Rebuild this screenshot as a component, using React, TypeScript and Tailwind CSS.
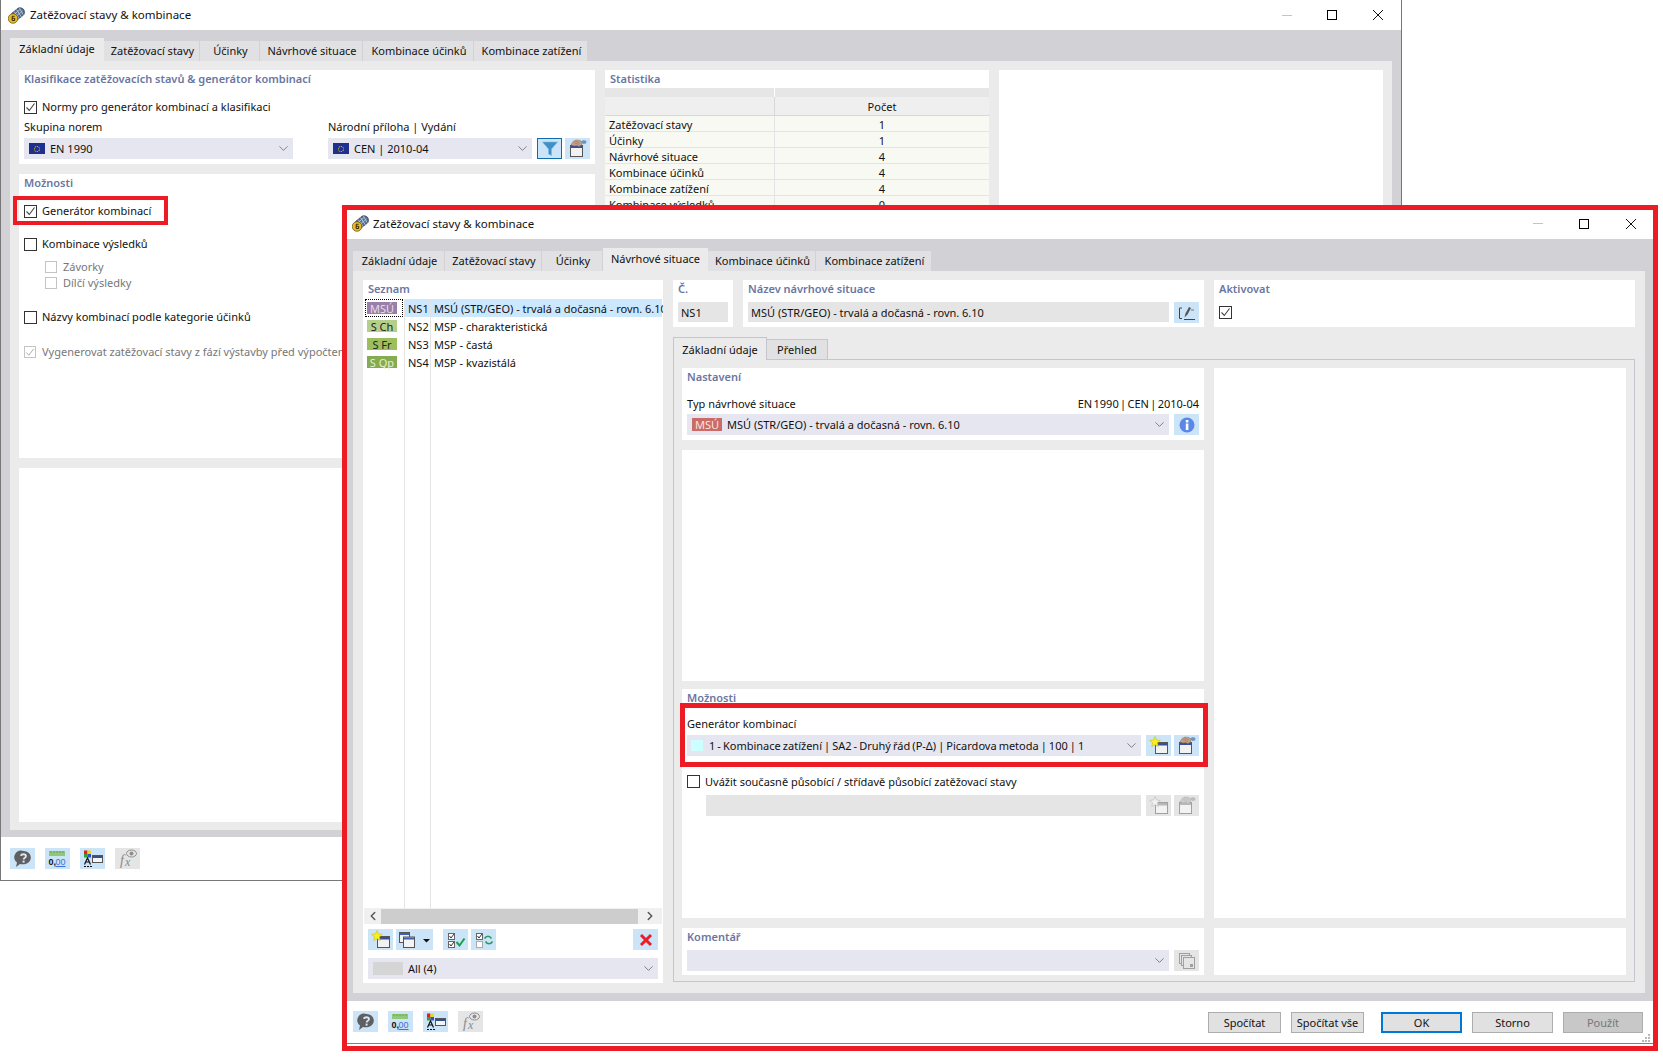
import type { ReactNode } from 'react';
import { ChevronDown, ChevronLeft, ChevronRight } from 'lucide-react';

function AppIcon() {
  return (
    <svg width="17" height="17" viewBox="0 0 17 17" className="shrink-0">
      <path d="M3.500 6.500L10 1.200c1.500-1 5-.4 6 1.800 1 2.200.4 4.500-1 5.500L8.500 13.500z" fill="#566d8c" stroke="#2c3b52" strokeWidth="0.700" />
      <path d="M6 4.500l5.500 7.500M8.500 2.500l5 7.500M11.500 1l3.500 6.500M5 8.500l7-6M6.500 10.500l8-6.500" stroke="#c4d2e4" strokeWidth="0.800" />
      <circle cx="5" cy="11.500" r="4.800" fill="#e9b92c" stroke="#5f4c10" strokeWidth="0.700" />
      <path d="M6.500 9.300h-2.300v4.200h2.500v-2.200h-2.500" fill="none" stroke="#3c2f08" strokeWidth="1" />
    </svg>
  );
}

function WindowControls({ gap }: { gap: string }) {
  return (
    <div className={`flex items-center ${gap}`}>
      <div className="h-px w-[10px] bg-[#c4c4c4]" />
      <div className="size-[10px] border border-black" />
      <svg width="12" height="12" viewBox="0 0 12 12">
        <path d="M1 1l10 10M11 1L1 11" stroke="#111" strokeWidth="1" />
      </svg>
    </div>
  );
}

function Flag() {
  return (
    <div className="flex h-[11px] w-[16px] shrink-0 items-center justify-center bg-[#1f2f8f]">
      <div className="size-[6px] rounded-full border border-dotted border-[#e8c840]" />
    </div>
  );
}

function Check({ on, size = 'size-[13px]', tone = 'border-[#333333]', mark = '#444444' }: { on?: boolean; size?: string; tone?: string; mark?: string }) {
  return (
    <div className={`${size} ${tone} flex shrink-0 items-center justify-center border bg-white`}>
      {on && (
        <svg width="11" height="11" viewBox="0 0 11 11">
          <path d="M1.500 5.500l2.800 3L9.500 1.500" fill="none" stroke={mark} strokeWidth="1.100" />
        </svg>
      )}
    </div>
  );
}

// noto sits a bit low in its box, this pulls a label up by a pixel
function Txt({ children }: { children: ReactNode }) {
  return <span className="-mt-[2px] whitespace-nowrap">{children}</span>;
}

function Heading({ children, className = 'h-[18px]' }: { children: ReactNode; className?: string }) {
  return (
    <div className={`${className} flex items-center font-semibold text-[#6a76a2]`}>
      <Txt>{children}</Txt>
    </div>
  );
}

function Btn({ children, off, wide }: { children: ReactNode; off?: boolean; wide?: boolean }) {
  return (
    <div className={`${off ? 'bg-[#e5e5e5]' : 'bg-[#cce4f7]'} ${wide ? 'w-[37px]' : 'w-[25px]'} flex h-[21px] shrink-0 items-center justify-center`}>
      {children}
    </div>
  );
}

function NewIcon({ off }: { off?: boolean }) {
  return (
    <svg width="20" height="19" viewBox="0 0 20 19">
      <rect x="6.500" y="6.500" width="12" height="11" fill="#f2f2f2" stroke={off ? '#a0a0a0' : '#555555'} />
      <rect x="7" y="7" width="11" height="2.500" fill={off ? '#b8b8b8' : '#34509c'} />
      <path d="M6 0.500l1.500 3.500 3.800.4-2.900 2.500.9 3.700L6 8.700l-3.300 1.900.9-3.700L.7 4.400l3.800-.4z" fill={off ? '#f0f0f0' : '#f8ee20'} stroke={off ? '#b0b0b0' : '#c8b400'} strokeWidth="0.500" />
    </svg>
  );
}

function HandIcon({ off }: { off?: boolean }) {
  return (
    <svg width="20" height="19" viewBox="0 0 20 19">
      <rect x="2.500" y="6.500" width="12" height="11" fill="#f2f2f2" stroke={off ? '#a0a0a0' : '#555555'} />
      <rect x="3" y="7" width="11" height="2" fill={off ? '#b8b8b8' : '#34509c'} />
      <path d="M3 6l2-3.500 3-1.500 4 .5 2 1.500-.5 3-2.500 1.500-2.500-1-2 .5z" fill={off ? '#cccccc' : '#c79f82'} stroke={off ? '#acacac' : '#8c6f5a'} strokeWidth="0.500" />
      <path d="M6 3.500l5 2M7 2l5 2" stroke={off ? '#b4b4b4' : '#8c6f5a'} strokeWidth="0.500" />
      <path d="M13 2.500c2-1.700 3.500-1.700 5.500-.5l-.5 2.500-3 .5z" fill={off ? '#bcbcbc' : '#6f93c4'} />
    </svg>
  );
}

function HelpIcon() {
  return (
    <svg width="20" height="18" viewBox="0 0 20 18">
      <path d="M10.500 1a7 6.600 0 0 1 2 13c-2 .4-4 .3-5.500 0L3 17l1-4.500A7 6.600 0 0 1 10.500 1z" fill="#5f5f62" />
      <path d="M8 5.800c.3-2 4.800-2.200 5 .2.100 1.700-2.300 1.800-2.400 3.500" fill="none" stroke="#dbe8f4" strokeWidth="1.800" />
      <rect x="9.600" y="10.600" width="2" height="2" fill="#dbe8f4" />
    </svg>
  );
}

function UnitsIcon() {
  return (
    <svg width="20" height="18" viewBox="0 0 20 18" className="overflow-visible">
      <rect x="1" y="1" width="16" height="5" fill="#8fc878" />
      <path d="M3 1v2M6 1v2M9 1v2M12 1v2M15 1v2" stroke="#5c9a48" strokeWidth="0.800" />
      <text x="0.500" y="15" fontSize="9" fontWeight="700" fontFamily="Liberation Sans" fill="#111">0,</text>
      <text x="7.500" y="15" fontSize="9" fontFamily="Liberation Sans" fill="#3f6fd8">00</text>
      <path d="M7.500 16.500h10" stroke="#3f6fd8" strokeWidth="1" />
    </svg>
  );
}

function ColorIcon() {
  return (
    <svg width="20" height="18" viewBox="0 0 20 18">
      <rect x="1" y="0.500" width="3.500" height="3.500" fill="#e02020" />
      <rect x="4.500" y="0.500" width="3.500" height="3.500" fill="#e8d820" />
      <rect x="1" y="4" width="3.500" height="3.500" fill="#30a030" />
      <rect x="4.500" y="4" width="3.500" height="3.500" fill="#3050d0" />
      <rect x="9.500" y="5.500" width="10" height="7" fill="#f4f4f4" stroke="#555" />
      <rect x="10" y="6" width="9" height="2" fill="#33508f" />
      <path d="M1.500 14.500L4.500 8l3 6.500M2.800 12h3.400" fill="none" stroke="#111" strokeWidth="1.200" />
      <path d="M1 16.500h2M4 16.500h2M7 16.500h2" stroke="#111" strokeWidth="1.200" />
    </svg>
  );
}

function FxIcon() {
  return (
    <svg width="20" height="19" viewBox="0 0 20 19" className="overflow-visible">
      <text x="2" y="15.500" fontSize="14" fontStyle="italic" fontFamily="Liberation Serif" fill="#8a8a8a">f</text>
      <text x="7" y="16.500" fontSize="12" fontStyle="italic" fontFamily="Liberation Serif" fill="#8a8a8a">x</text>
      <ellipse cx="13.500" cy="4.500" rx="5" ry="3.500" fill="none" stroke="#8f8f8f" />
      <circle cx="13.500" cy="4.500" r="2" fill="#8f8f8f" />
    </svg>
  );
}

function FooterIcons() {
  return (
    <div className="flex gap-[10px]">
      <Btn><HelpIcon /></Btn>
      <Btn><UnitsIcon /></Btn>
      <Btn><ColorIcon /></Btn>
      <Btn off><FxIcon /></Btn>
    </div>
  );
}

function Select({ children, className }: { children: ReactNode; className: string }) {
  return (
    <div className={`${className} flex h-[21px] items-center bg-[#e6e6f0] pr-[2px]`}>
      <div className="flex min-w-0 flex-1 items-center whitespace-nowrap">{children}</div>
      <ChevronDown size={15} strokeWidth={1} className="shrink-0 text-[#444444]" />
    </div>
  );
}

function Tab({ label, w, active }: { label: string; w: string; active?: boolean }) {
  return (
    <div className={`${w} ${active ? 'h-[23px] bg-[#ebebeb]' : 'h-[20px] border-r border-[#d1d1d6] bg-[#e1e1e3] pl-[2px]'} flex items-center justify-center whitespace-nowrap`}>
      <Txt>{label}</Txt>
    </div>
  );
}

const stats = [
  ['Zatěžovací stavy', '1'],
  ['Účinky', '1'],
  ['Návrhové situace', '4'],
  ['Kombinace účinků', '4'],
  ['Kombinace zatížení', '4'],
  ['Kombinace výsledků', '0'],
];

function BackWindow() {
  return (
    <div className="absolute left-0 top-0 flex h-[881px] w-[1402px] flex-col border-x border-b border-[#777777] bg-[#d1d1d6]">
      <div className="flex h-[30px] shrink-0 items-center justify-between bg-white pl-[7px] pr-[17px]">
        <div className="flex items-center gap-[5px] text-[11.5px]">
          <AppIcon />
          Zatěžovací stavy &amp; kombinace
        </div>
        <WindowControls gap="gap-[35px]" />
      </div>
      <div className="flex h-[31px] shrink-0 items-end pl-[9px]">
        <Tab label="Základní údaje" w="w-[94px]" active />
        <Tab label="Zatěžovací stavy" w="w-[96px]" />
        <Tab label="Účinky" w="w-[60px]" />
        <Tab label="Návrhové situace" w="w-[103px]" />
        <Tab label="Kombinace účinků" w="w-[111px]" />
        <Tab label="Kombinace zatížení" w="w-[114px]" />
      </div>
      <div className="mx-[9px] flex h-[769px] shrink-0 gap-[10px] bg-[#ebebeb] px-[9px] pb-[8px] pt-[9px]">
        <div className="flex w-[576px] shrink-0 flex-col">
          <div className="h-[94px] bg-white px-[5px]">
            <Heading>Klasifikace zatěžovacích stavů &amp; generátor kombinací</Heading>
            <div className="mt-[13px] flex h-[13px] items-center gap-[5px]">
              <Check on />
              <Txt>Normy pro generátor kombinací a klasifikaci</Txt>
            </div>
            <div className="mt-[5px] flex">
              <div className="w-[269px]">
                <div className="flex h-[16px] items-center"><Txt>Skupina norem</Txt></div>
                <Select className="mt-[3px] w-full">
                  <div className="ml-[5px] mr-[5px]"><Flag /></div>
                  EN 1990
                </Select>
              </div>
              <div className="ml-[35px]">
                <div className="flex h-[16px] items-center"><Txt>Národní příloha | Vydání</Txt></div>
                <div className="mt-[3px] flex">
                  <Select className="w-[204px]">
                    <div className="ml-[5px] mr-[5px]"><Flag /></div>
                    CEN | 2010-04
                  </Select>
                  <div className="ml-[5px] flex h-[21px] w-[25px] items-center justify-center border border-[#0f6cab] bg-[#cce4f7]">
                    <svg width="16" height="15" viewBox="0 0 16 15">
                      <path d="M0.500 1h15L9.500 8v6.500L6.500 13V8z" fill="#3f8fc8" stroke="#7db8e0" strokeWidth="0.600" />
                    </svg>
                  </div>
                  <div className="ml-[3px]"><Btn><HandIcon /></Btn></div>
                </div>
              </div>
            </div>
          </div>
          <div className="mt-[10px] h-[284px] bg-white px-[5px]">
            <Heading>Možnosti</Heading>
            <div className="mt-[13px] flex h-[13px] items-center gap-[5px]">
              <Check on />
              <Txt>Generátor kombinací</Txt>
            </div>
            <div className="mt-[20px] flex h-[13px] items-center gap-[5px]">
              <Check />
              <Txt>Kombinace výsledků</Txt>
            </div>
            <div className="mt-[10px] flex h-[12px] items-center gap-[6px] pl-[21px] text-[#777777]">
              <Check size="size-[12px]" tone="border-[#c4c4c4]" />
              <Txt>Závorky</Txt>
            </div>
            <div className="mt-[4px] flex h-[12px] items-center gap-[6px] pl-[21px] text-[#777777]">
              <Check size="size-[12px]" tone="border-[#c4c4c4]" />
              <Txt>Dílčí výsledky</Txt>
            </div>
            <div className="mt-[22px] flex h-[13px] items-center gap-[5px]">
              <Check />
              <Txt>Názvy kombinací podle kategorie účinků</Txt>
            </div>
            <div className="mt-[22px] flex h-[12px] items-center gap-[6px] whitespace-nowrap text-[#777777]">
              <Check on size="size-[12px]" tone="border-[#c4c4c4]" mark="#b0b0b0" />
              <Txt>Vygenerovat zatěžovací stavy z fází výstavby před výpočtem</Txt>
            </div>
          </div>
          <div className="mt-[10px] flex-1 bg-white" />
        </div>
        <div className="w-[384px] shrink-0 bg-white">
          <div className="px-[5px]"><Heading>Statistika</Heading></div>
          <div className="grid h-[9px] grid-cols-[169px_1fr] gap-px bg-white">
            <div className="bg-[#e6e6e6]" />
            <div className="bg-[#e6e6e6]" />
          </div>
          <div className="grid h-[19px] grid-cols-[169px_1fr] gap-px border-b border-[#d8d8d8] bg-[#d8d8d8]">
            <div className="bg-[#efefef]" />
            <div className="flex items-center justify-center bg-[#efefef]">Počet</div>
          </div>
          {stats.map(([name, count]) => (
            <div key={name} className="grid h-[16px] grid-cols-[170px_1fr] border-b border-[#e4e4e4] bg-[#f9f9f3]">
              <div className="flex items-center border-r border-[#e4e4e4] pl-[4px] pt-[2px]">{name}</div>
              <div className="flex items-center justify-center pt-[2px]">{count}</div>
            </div>
          ))}
        </div>
        <div className="w-[384px] shrink-0 bg-white" />
      </div>
      <div className="h-[7px] shrink-0" />
      <div className="flex flex-1 bg-white pl-[9px] pt-[11px]">
        <FooterIcons />
      </div>
    </div>
  );
}

const situations = [
  { badge: 'MSÚ', tone: 'bg-[#9a7fa6] text-[#e8dcec]', no: 'NS1', name: 'MSÚ (STR/GEO) - trvalá a dočasná - rovn. 6.10' },
  { badge: 'S Ch', tone: 'bg-[#b5cf8a] text-[#222222]', no: 'NS2', name: 'MSP - charakteristická' },
  { badge: 'S Fr', tone: 'bg-[#9cbe5c] text-[#222222]', no: 'NS3', name: 'MSP - častá' },
  { badge: 'S Qp', tone: 'bg-[#86ab50] text-[#e4efd4]', no: 'NS4', name: 'MSP - kvazistálá' },
];

function ListPanel() {
  return (
    <div className="flex h-[703px] w-[300px] shrink-0 flex-col bg-white pb-[4px]">
      <div className="px-[5px]"><Heading className="h-[19px]">Seznam</Heading></div>
      <div className="flex h-[609px] shrink-0 overflow-hidden">
        <div className="w-[42px] shrink-0 border-r border-[#e4e4e4]">
          {situations.map((s, i) => (
            <div key={s.no} className="relative flex h-[18px] items-center pl-[4px]">
              {i === 0 && <div className="absolute left-[2px] top-0 h-[18px] w-[38px] border border-dotted border-black" />}
              <div className={`${s.tone} flex h-[12px] w-[30px] items-center justify-center whitespace-nowrap`}>{s.badge}</div>
            </div>
          ))}
        </div>
        <div className="w-[26px] shrink-0 border-r border-[#e4e4e4]">
          {situations.map((s, i) => (
            <div key={s.no} className={`${i === 0 ? 'bg-[#cce8ff]' : ''} flex h-[18px] items-center pl-[3px]`}>{s.no}</div>
          ))}
        </div>
        <div className="min-w-0 flex-1 overflow-hidden">
          {situations.map((s, i) => (
            <div key={s.no} className={`${i === 0 ? 'bg-[#cce8ff]' : ''} mr-px flex h-[18px] items-center whitespace-nowrap pl-[3px]`}>{s.name}</div>
          ))}
        </div>
      </div>
      <div className="mx-px flex h-[16px] shrink-0 items-center bg-[#f0f0f0]">
        <div className="flex w-[17px] justify-center">
          <ChevronLeft size={14} strokeWidth={2.5} className="text-[#555555]" />
        </div>
        <div className="h-[15px] w-[257px] bg-[#cdcdcd]" />
        <div className="flex flex-1 justify-center">
          <ChevronRight size={14} strokeWidth={2.5} className="text-[#555555]" />
        </div>
      </div>
      <div className="mt-[5px] flex px-[5px]">
        <Btn><NewIcon /></Btn>
        <div className="ml-[3px]">
          <Btn wide>
            <svg width="33" height="18" viewBox="0 0 33 18">
              <rect x="1.500" y="1.500" width="10" height="10" fill="#f4f4f4" stroke="#555" />
              <rect x="2" y="2" width="9" height="2" fill="#3f5fb0" />
              <rect x="5.500" y="6" width="11" height="10.500" fill="#f4f4f4" stroke="#555" />
              <rect x="6" y="6.500" width="10" height="2" fill="#3f5fb0" />
              <path d="M25 8h7l-3.500 3.500z" fill="#111" />
            </svg>
          </Btn>
        </div>
        <div className="ml-[10px]">
          <Btn>
            <svg width="20" height="18" viewBox="0 0 20 18">
              <rect x="2.500" y="2.500" width="6" height="6" fill="#fff" stroke="#666" />
              <rect x="2.500" y="10.500" width="6" height="6" fill="#fff" stroke="#666" />
              <path d="M3.500 5l1.500 2 3-4M3.500 13l1.500 2 3-4" fill="none" stroke="#333" />
              <path d="M10.500 11l3 3.500 5-7" fill="none" stroke="#18a050" strokeWidth="2" />
            </svg>
          </Btn>
        </div>
        <div className="ml-[3px]">
          <Btn>
            <svg width="20" height="18" viewBox="0 0 20 18">
              <rect x="2.500" y="2.500" width="6" height="6" fill="#fff" stroke="#666" />
              <rect x="2.500" y="10.500" width="6" height="6" fill="#fff" stroke="#aaa" />
              <path d="M3.500 5l1.500 2 3-4" fill="none" stroke="#333" />
              <path d="M10.500 7.500c2-3 5-3 7 0M18.500 10.500c-2 3-5 3-7 0" fill="none" stroke="#2a9a60" strokeWidth="1.600" />
            </svg>
          </Btn>
        </div>
        <div className="ml-auto">
          <Btn>
            <svg width="14" height="14" viewBox="0 0 14 14">
              <path d="M2 2l10 10M12 2L2 12" stroke="#ee1c25" strokeWidth="3" />
            </svg>
          </Btn>
        </div>
      </div>
      <div className="mt-[8px] px-[5px]">
        <Select className="w-full">
          <div className="ml-[5px] mr-[5px] h-[13px] w-[30px] bg-[#d5d5d5]" />
          All (4)
        </Select>
      </div>
    </div>
  );
}

function FrontWindow() {
  return (
    <div className="absolute left-[342px] top-[205px] flex h-[846px] w-[1316px] flex-col border-[5px] border-[#ed1c24] bg-[#d1d1d6]">
      <div className="flex h-[29px] shrink-0 items-center justify-between bg-white pb-[2px] pl-[5px] pr-[16px]">
        <div className="flex items-center gap-[4px] text-[11.5px]">
          <AppIcon />
          Zatěžovací stavy &amp; kombinace
        </div>
        <WindowControls gap="gap-[36px]" />
      </div>
      <div className="flex h-[32px] shrink-0 items-end pl-[6px]">
        <Tab label="Základní údaje" w="w-[92px]" />
        <Tab label="Zatěžovací stavy" w="w-[97px]" />
        <Tab label="Účinky" w="w-[61px]" />
        <Tab label="Návrhové situace" w="w-[105px]" active />
        <Tab label="Kombinace účinků" w="w-[108px]" />
        <Tab label="Kombinace zatížení" w="w-[116px]" />
      </div>
      <div className="ml-[6px] mr-[8px] flex h-[722px] shrink-0 gap-[10px] bg-[#ebebeb] pl-[10px] pt-[9px]">
        <ListPanel />
        <div className="flex w-[962px] shrink-0 flex-col">
          <div className="flex h-[47px] shrink-0 gap-[10px]">
            <div className="w-[60px] bg-white px-[5px]">
              <Heading>Č.</Heading>
              <div className="mt-[4px] flex h-[20px] items-center bg-[#e5e5e5] pl-[3px]">NS1</div>
            </div>
            <div className="w-[461px] bg-white px-[5px]">
              <Heading>Název návrhové situace</Heading>
              <div className="mt-[4px] flex gap-[5px]">
                <div className="flex h-[20px] flex-1 items-center bg-[#e5e5e5] pl-[3px]">MSÚ (STR/GEO) - trvalá a dočasná - rovn. 6.10</div>
                <Btn>
                  <svg width="18" height="16" viewBox="0 0 18 16">
                    <path d="M4 3H1.500v10.500H4M6 14.500h11" fill="none" stroke="#444" />
                    <path d="M6.500 12.500l1-4L11 2l2 1-3.500 6.500z" fill="#555" />
                    <path d="M13 5h3" stroke="#777" />
                  </svg>
                </Btn>
              </div>
            </div>
            <div className="flex-1 bg-white px-[5px]">
              <Heading>Aktivovat</Heading>
              <div className="mt-[8px]"><Check on /></div>
            </div>
          </div>
          <div className="mt-[10px] flex h-[22px] shrink-0 items-end">
            <div className="flex h-[23px] w-[94px] translate-y-px items-center justify-center border-x border-t border-[#c5c5cf] bg-[#ebebeb]">Základní údaje</div>
            <div className="flex h-[20px] w-[61px] items-center justify-center border-r border-t border-[#c5c5cf] bg-[#e1e1e3]">Přehled</div>
          </div>
          <div className="flex h-[623px] shrink-0 gap-[10px] border border-[#c5c5cf] pl-[8px] pt-[8px]">
            <div className="flex w-[522px] shrink-0 flex-col">
              <div className="h-[72px] bg-white px-[5px]">
                <Heading>Nastavení</Heading>
                <div className="mt-[10px] flex h-[16px] items-center justify-between">
                  <Txt>Typ návrhové situace</Txt>
                  <span className="-mt-[2px] whitespace-nowrap [word-spacing:-1.5px]">EN 1990 | CEN | 2010-04</span>
                </div>
                <div className="mt-[2px] flex gap-[5px]">
                  <Select className="w-[483px]">
                    <div className="ml-[5px] mr-[5px] flex h-[13px] w-[30px] items-center justify-center bg-[#cb6a6a] text-[#fbe4d8]">MSÚ</div>
                    MSÚ (STR/GEO) - trvalá a dočasná - rovn. 6.10
                  </Select>
                  <Btn>
                    <svg width="16" height="16" viewBox="0 0 16 16">
                      <circle cx="8" cy="8" r="7.500" fill="#5b87e6" />
                      <rect x="6.800" y="6.500" width="2.600" height="6.500" fill="#fff" />
                      <rect x="6.800" y="3" width="2.600" height="2.500" fill="#fff" />
                    </svg>
                  </Btn>
                </div>
              </div>
              <div className="mt-[10px] h-[231px] bg-white" />
              <div className="mt-[8px] h-[229px] bg-white px-[5px]">
                <Heading>Možnosti</Heading>
                <div className="mt-[9px] flex h-[16px] items-center"><Txt>Generátor kombinací</Txt></div>
                <div className="mt-[3px] flex gap-[5px]">
                  <Select className="w-[455px]">
                    <div className="ml-[4px] mr-[6px] h-[11px] w-[12px] bg-[#ccffff]" />
                    <span className="[word-spacing:-0.8px]">1 - Kombinace zatížení | SA2 - Druhý řád (P-Δ) | Picardova metoda | 100 | 1</span>
                  </Select>
                  <Btn><NewIcon /></Btn>
                  <div className="-ml-[2px]"><Btn><HandIcon /></Btn></div>
                </div>
                <div className="mt-[19px] flex h-[13px] items-center gap-[5px]">
                  <Check />
                  <span className="whitespace-nowrap">Uvážit současně působící / střídavě působící zatěžovací stavy</span>
                </div>
                <div className="ml-[19px] mt-[7px] flex gap-[5px]">
                  <div className="h-[21px] w-[436px] bg-[#e5e5e5]" />
                  <Btn off><NewIcon off /></Btn>
                  <div className="-ml-[2px]"><Btn off><HandIcon off /></Btn></div>
                </div>
              </div>
              <div className="mt-[10px] h-[47px] bg-white px-[5px]">
                <Heading>Komentář</Heading>
                <div className="mt-[4px] flex gap-[5px]">
                  <Select className="w-[482px]"><span /></Select>
                  <Btn off>
                    <svg width="16" height="16" viewBox="0 0 16 16">
                      <rect x="0.500" y="0.500" width="10" height="10" fill="#e5e5e5" stroke="#a0a0a0" />
                      <rect x="2.500" y="2.500" width="10" height="10" fill="#e5e5e5" stroke="#a0a0a0" />
                      <rect x="4.500" y="4.500" width="11" height="11" fill="#e5e5e5" stroke="#a0a0a0" />
                      <rect x="11" y="11" width="3" height="3" fill="#a0a0a0" />
                    </svg>
                  </Btn>
                </div>
              </div>
            </div>
            <div className="flex w-[412px] shrink-0 flex-col">
              <div className="h-[550px] bg-white" />
              <div className="mt-[10px] h-[47px] bg-white" />
            </div>
          </div>
        </div>
      </div>
      <div className="h-[8px] shrink-0" />
      <div className="relative h-[45px] shrink-0 bg-white">
        <div className="flex h-[43px] justify-between border-b border-[#808080] pl-[6px] pr-[10px] pt-[10px]">
          <FooterIcons />
          <div className="mt-px flex">
            <div className="flex h-[21px] w-[73px] items-center justify-center border border-[#adadad] bg-[#e1e1e1]">Spočítat</div>
            <div className="ml-[10px] flex h-[21px] w-[73px] items-center justify-center border border-[#adadad] bg-[#e1e1e1]">Spočítat vše</div>
            <div className="ml-[17px] flex h-[21px] w-[81px] items-center justify-center border-2 border-[#0078d7] bg-[#e1e1e1]">OK</div>
            <div className="ml-[10px] flex h-[21px] w-[81px] items-center justify-center border border-[#adadad] bg-[#e1e1e1]">Storno</div>
            <div className="ml-[10px] flex h-[21px] w-[80px] items-center justify-center border border-[#adadad] bg-[#c8c8c8] text-[#777777]">Použít</div>
          </div>
        </div>
        <svg width="9" height="9" viewBox="0 0 9 9" className="absolute bottom-[3px] right-[2px]">
          <path d="M6 0h2v2H6zM3 3h2v2H3zM6 3h2v2H6zM0 6h2v2H0zM3 6h2v2H3zM6 6h2v2H6z" fill="#b8b8b8" />
        </svg>
      </div>
    </div>
  );
}

export default function App() {
  return (
    <div className="relative h-[1057px] w-[1663px] overflow-hidden bg-white font-['Noto_Sans',sans-serif] text-[11px] leading-none text-[#111111]">
      <BackWindow />
      <div className="absolute left-[13px] top-[196px] h-[29px] w-[155px] border-[4px] border-[#ed1c24]" />
      <FrontWindow />
      <div className="absolute left-[680px] top-[703px] h-[64px] w-[528px] border-[5px] border-[#ed1c24]" />
    </div>
  );
}
